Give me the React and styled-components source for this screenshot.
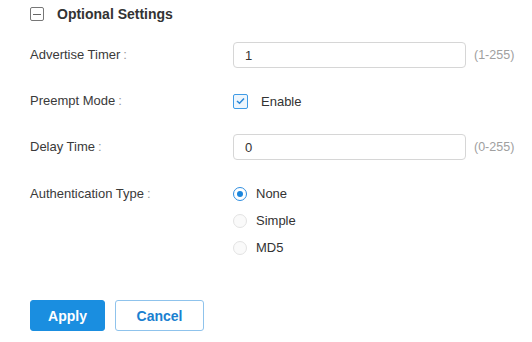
import React from 'react';
import styled, { createGlobalStyle } from 'styled-components';

const Global = createGlobalStyle`
  html, body { margin: 0; padding: 0; background: #fff; }
  body { font-family: "Liberation Sans", Arial, sans-serif; color: #333; }
`;

const Page = styled.div`
  width: 532px;
  height: 342px;
  padding-left: 30px;
  box-sizing: border-box;
  display: flex;
  flex-direction: column;
`;

const Header = styled.div`
  height: 28px;
  display: flex;
  align-items: center;
  gap: 13px;
  font-size: 14px;
  font-weight: bold;
  color: #333;
`;

const CollapseBox = styled.span`
  width: 12px;
  height: 12px;
  border: 1px solid #777;
  border-radius: 2px;
  display: flex;
  align-items: center;
  justify-content: center;
  &::after {
    content: '';
    width: 8px;
    height: 1px;
    background: #666;
  }
`;

const Form = styled.div`
  margin-top: 14px;
  display: flex;
  flex-direction: column;
  gap: 20px;
`;

const Row = styled.div`
  display: flex;
  align-items: flex-start;
`;

const Label = styled.div`
  width: 203px;
  height: ${p => p.$h || 26}px;
  line-height: ${p => p.$h || 26}px;
  font-size: 13px;
  color: #3a3a3a;
  span { color: #999; margin-left: 3px; }
`;

const Control = styled.div`
  display: flex;
  align-items: center;
  height: 26px;
`;

const Input = styled.input`
  width: 233px;
  height: 26px;
  box-sizing: border-box;
  border: 1px solid #d6d6d6;
  border-radius: 4px;
  padding: 0 11px;
  font: 13px "Liberation Sans", Arial, sans-serif;
  color: #333;
  outline: none;
`;

const Hint = styled.span`
  margin-left: 8px;
  font-size: 12.5px;
  color: #a0a0a0;
`;

const Check = styled.span`
  width: 13px;
  height: 13px;
  border: 1px solid #3f9be6;
  border-radius: 2px;
  background: #eef6fd;
  display: flex;
  align-items: center;
  justify-content: center;
`;

const OptText = styled.span`
  font-size: 13px;
  color: #333;
  margin-left: ${p => p.$ml}px;
`;

const RadioList = styled.div`
  display: flex;
  flex-direction: column;
`;

const RadioRow = styled.div`
  height: 27px;
  display: flex;
  align-items: center;
`;

const Radio = styled.span`
  width: 14px;
  height: 14px;
  box-sizing: border-box;
  border-radius: 50%;
  border: 1px solid ${p => (p.$on ? '#2f8ee0' : '#e3e3e3')};
  background: ${p => (p.$on ? '#fff' : '#fafafa')};
  display: flex;
  align-items: center;
  justify-content: center;
  &::after {
    content: '';
    display: ${p => (p.$on ? 'block' : 'none')};
    width: 6px;
    height: 6px;
    border-radius: 50%;
    background: #1c86dc;
  }
`;

const Buttons = styled.div`
  margin-top: 39px;
  display: flex;
  gap: 10px;
`;

const Button = styled.button`
  height: 31px;
  width: ${p => p.$w}px;
  box-sizing: border-box;
  border-radius: 3px;
  font: bold 14px "Liberation Sans", Arial, sans-serif;
  border: 1px solid ${p => (p.$primary ? '#1a8ee0' : '#8fc3ec')};
  background: ${p => (p.$primary ? '#1a8ee0' : '#fff')};
  color: ${p => (p.$primary ? '#fff' : '#1a80d0')};
  padding: 0;
`;

export default function App() {
  return (
    <>
      <Global />
      <Page>
        <Header>
          <CollapseBox />
          Optional Settings
        </Header>
        <Form>
          <Row>
            <Label>Advertise Timer<span>:</span></Label>
            <Control>
              <Input defaultValue="1" />
              <Hint>(1-255)</Hint>
            </Control>
          </Row>
          <Row>
            <Label>Preempt Mode<span>:</span></Label>
            <Control>
              <Check>
                <svg width="9" height="8" viewBox="0 0 9 8">
                  <path d="M1 4 L3.5 6.3 L8 1.5" fill="none" stroke="#2a88d8" strokeWidth="1.5" />
                </svg>
              </Check>
              <OptText $ml={13}>Enable</OptText>
            </Control>
          </Row>
          <Row>
            <Label>Delay Time<span>:</span></Label>
            <Control>
              <Input defaultValue="0" />
              <Hint>(0-255)</Hint>
            </Control>
          </Row>
          <Row>
            <Label $h={27}>Authentication Type<span>:</span></Label>
            <RadioList>
              {['None', 'Simple', 'MD5'].map((t, i) => (
                <RadioRow key={t}>
                  <Radio $on={i === 0} />
                  <OptText $ml={9}>{t}</OptText>
                </RadioRow>
              ))}
            </RadioList>
          </Row>
        </Form>
        <Buttons>
          <Button $primary $w={75}>Apply</Button>
          <Button $w={89}>Cancel</Button>
        </Buttons>
      </Page>
    </>
  );
}
